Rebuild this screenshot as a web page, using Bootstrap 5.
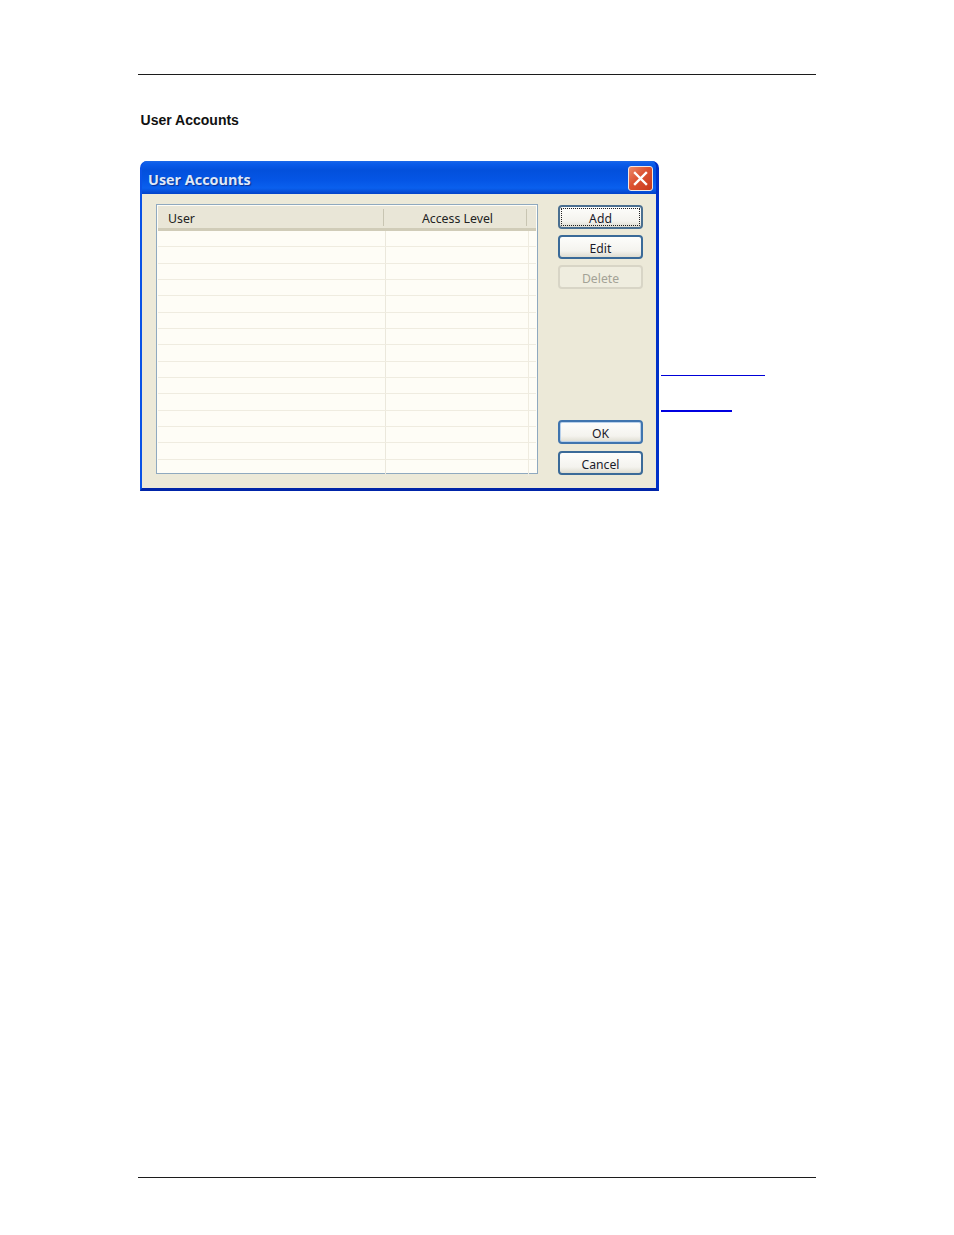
<!DOCTYPE html>
<html lang="en">
<head>
<meta charset="utf-8">
<title>User Accounts</title>
<link href="https://cdn.jsdelivr.net/npm/bootstrap@5.3.0/dist/css/bootstrap.min.css" rel="stylesheet">
<style>
html,body{background:#fff;}
.sheet{width:954px;height:1235px;padding:74px 138px 0;overflow:hidden;}
.rule{height:1px;background:#1c1c1c;}
.doc-title{font:700 14px/17px "Liberation Sans",Arial,sans-serif;color:#111;margin:37px 0 32px 2.6px;}
.xp-row{margin-left:2px;}
.xp-win{width:519px;height:330px;border-radius:7px 7px 0 0;background:#0a50dc;border-style:solid;border-width:0 3px 3px 2px;border-color:#0a52e6 #0030c8 #0024a8 #0a52e6;overflow:hidden;flex:none;}
.xp-title{height:33px;margin:0 -3px 0 -2px;padding:2px 6px 0 8px;background:linear-gradient(180deg,#1c68e8 0,#0b5cea 8%,#0350dc 28%,#0556e6 60%,#0a60ee 82%,#0342c8 100%);}
.xp-caption{font:700 14.4px/20px "Open Sans","Liberation Sans",sans-serif;color:#dfe8f8;text-shadow:1px 1px 1px #0a2f90;margin-top:2px;}
.xp-close{width:25px;height:25px;padding:0;border:1px solid #f3e6e0;border-radius:3px;background:linear-gradient(135deg,#ec8a6a 0,#dc5232 45%,#c83a1c 100%);}
.xp-body{height:294px;background:#ece9d8;padding:10px 13px 0 14px;}
.xp-list{width:382px;height:270px;border:1px solid #8fa9bf;background:#fefdf6;padding:1px;flex:none;}
.xp-head{height:25px;background:#e9e6d7;border-bottom:3px solid #d0ccb8;padding-bottom:0;}
.xp-text{font:400 12.3px/18px "Noto Sans","Liberation Sans",sans-serif;color:#222;}
.xp-h1{width:226px;padding-left:10px;border-right:1px solid #c8c5b2;height:17px;line-height:20px;}
.xp-h2{width:143px;padding-left:5px;text-align:center;border-right:1px solid #c8c5b2;height:17px;line-height:20px;}
.xp-rowline{height:16.33px;border-bottom:1px solid #efece0;}
.xp-cell1{width:228px;height:100%;border-right:1px solid #ebe8dc;}
.xp-cell2{width:143px;height:100%;border-right:1px solid #efece0;}
.xp-side{margin-left:20px;width:85px;height:271px;padding-top:1px;}
.btn.xp-btn{display:block;width:85px;height:24px;padding:2px 0 0;border:2px solid #3a6a98;border-radius:4px;background:linear-gradient(180deg,#fdfdfb 0,#f4f3ee 70%,#dedcd0 100%);font:400 12.2px/20px "Noto Sans","Liberation Sans",sans-serif;color:#1a1a2a;text-align:center;}
.btn.xp-ok{border-color:#3f74ae;box-shadow:inset 0 0 0 1px #b8d0ea;}
.btn.xp-focus{outline:1px dotted #222;outline-offset:-4px;border-color:#4a6f90;}
.btn.xp-btn:disabled{opacity:1;border:2px solid #d8d5c6;background:#efeddf;color:#a3a296;}
.xp-stack-top{row-gap:6px;}
.xp-stack-bottom{row-gap:7px;}
.xp-links{margin-left:2px;padding-top:214px;}
.xp-link1{width:104px;height:1px;background:#0000d8;}
.xp-link2{width:71px;height:2px;background:#0000e0;margin-top:34px;}
.rule-bottom{margin-top:686px;}
</style>
</head>
<body>
<main class="sheet">
  <div class="rule"></div>
  <h1 class="doc-title">User Accounts</h1>
  <div class="xp-row d-flex align-items-start">
    <section class="xp-win">
      <div class="xp-title d-flex align-items-center justify-content-between">
        <span class="xp-caption">User Accounts</span>
        <button type="button" class="xp-close d-flex align-items-center justify-content-center" aria-label="Close">
          <svg width="17" height="17" viewBox="0 0 17 17"><path d="M3 3L14 14M14 3L3 14" stroke="#fff" stroke-width="2.4" stroke-linecap="square"/></svg>
        </button>
      </div>
      <div class="xp-body d-flex align-items-start">
        <div class="xp-list">
          <div class="xp-head d-flex align-items-center xp-text">
            <div class="xp-h1">User</div>
            <div class="xp-h2">Access Level</div>
          </div>
          <div class="xp-rowline d-flex"><div class="xp-cell1"></div><div class="xp-cell2"></div></div>
          <div class="xp-rowline d-flex"><div class="xp-cell1"></div><div class="xp-cell2"></div></div>
          <div class="xp-rowline d-flex"><div class="xp-cell1"></div><div class="xp-cell2"></div></div>
          <div class="xp-rowline d-flex"><div class="xp-cell1"></div><div class="xp-cell2"></div></div>
          <div class="xp-rowline d-flex"><div class="xp-cell1"></div><div class="xp-cell2"></div></div>
          <div class="xp-rowline d-flex"><div class="xp-cell1"></div><div class="xp-cell2"></div></div>
          <div class="xp-rowline d-flex"><div class="xp-cell1"></div><div class="xp-cell2"></div></div>
          <div class="xp-rowline d-flex"><div class="xp-cell1"></div><div class="xp-cell2"></div></div>
          <div class="xp-rowline d-flex"><div class="xp-cell1"></div><div class="xp-cell2"></div></div>
          <div class="xp-rowline d-flex"><div class="xp-cell1"></div><div class="xp-cell2"></div></div>
          <div class="xp-rowline d-flex"><div class="xp-cell1"></div><div class="xp-cell2"></div></div>
          <div class="xp-rowline d-flex"><div class="xp-cell1"></div><div class="xp-cell2"></div></div>
          <div class="xp-rowline d-flex"><div class="xp-cell1"></div><div class="xp-cell2"></div></div>
          <div class="xp-rowline d-flex"><div class="xp-cell1"></div><div class="xp-cell2"></div></div>
          <div class="xp-rowline d-flex border-0"><div class="xp-cell1"></div><div class="xp-cell2"></div></div>
        </div>
        <div class="xp-side d-flex flex-column">
          <div class="d-flex flex-column xp-stack-top">
            <button type="button" class="btn xp-btn xp-focus">Add</button>
            <button type="button" class="btn xp-btn">Edit</button>
            <button type="button" class="btn xp-btn" disabled>Delete</button>
          </div>
          <div class="d-flex flex-column mt-auto xp-stack-bottom">
            <button type="button" class="btn xp-btn xp-ok">OK</button>
            <button type="button" class="btn xp-btn">Cancel</button>
          </div>
        </div>
      </div>
    </section>
    <div class="xp-links">
      <div class="xp-link1"></div>
      <div class="xp-link2"></div>
    </div>
  </div>
  <div class="rule rule-bottom"></div>
</main>
<script src="https://cdn.jsdelivr.net/npm/bootstrap@5.3.0/dist/js/bootstrap.bundle.min.js"></script>
</body>
</html>
